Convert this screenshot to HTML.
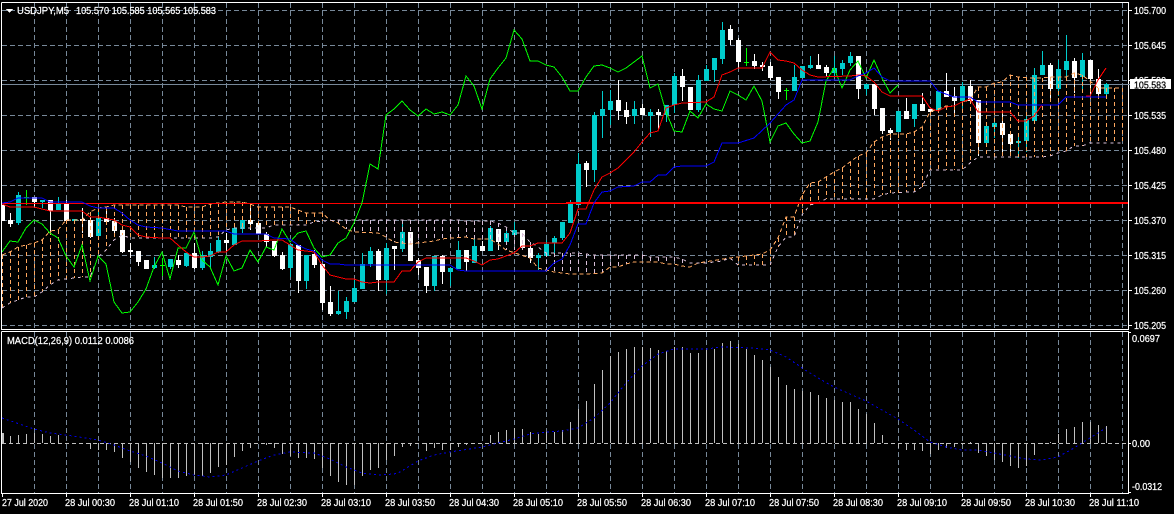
<!DOCTYPE html>
<html><head><meta charset="utf-8"><title>USDJPY,M5</title>
<style>html,body{margin:0;padding:0;background:#000;width:1174px;height:514px;overflow:hidden}svg{display:block}text{font-family:"Liberation Sans",sans-serif;font-size:10.500px;fill:#fff;stroke:#fff;stroke-width:.25px}</style>
</head><body>
<svg width="1174" height="514" viewBox="0 0 1174 514" xmlns="http://www.w3.org/2000/svg">
<rect width="1174" height="514" fill="#000"/>
<g shape-rendering="crispEdges" fill="none">
<!-- grid -->
<path stroke="#778899" stroke-dasharray="5 3" d="M2 10.5H1128M2 45.5H1128M2 80.5H1128M2 115.5H1128M2 150.5H1128M2 185.5H1128M2 220.5H1128M2 255.5H1128M2 290.5H1128M2 325.5H1128"/>
<path stroke="#778899" stroke-dasharray="5 3" d="M34.5 3V329M66.5 3V329M98.5 3V329M130.5 3V329M162.5 3V329M194.5 3V329M226.5 3V329M258.5 3V329M290.5 3V329M322.5 3V329M354.5 3V329M386.5 3V329M418.5 3V329M450.5 3V329M482.5 3V329M514.5 3V329M546.5 3V329M578.5 3V329M610.5 3V329M642.5 3V329M674.5 3V329M706.5 3V329M738.5 3V329M770.5 3V329M802.5 3V329M834.5 3V329M866.5 3V329M898.5 3V329M930.5 3V329M962.5 3V329M994.5 3V329M1026.5 3V329M1058.5 3V329M1090.5 3V329M1122.5 3V329"/>
<path stroke="#778899" stroke-dasharray="5 3" d="M34.5 332V493M66.5 332V493M98.5 332V493M130.5 332V493M162.5 332V493M194.5 332V493M226.5 332V493M258.5 332V493M290.5 332V493M322.5 332V493M354.5 332V493M386.5 332V493M418.5 332V493M450.5 332V493M482.5 332V493M514.5 332V493M546.5 332V493M578.5 332V493M610.5 332V493M642.5 332V493M674.5 332V493M706.5 332V493M738.5 332V493M770.5 332V493M802.5 332V493M834.5 332V493M866.5 332V493M898.5 332V493M930.5 332V493M962.5 332V493M994.5 332V493M1026.5 332V493M1058.5 332V493M1090.5 332V493M1122.5 332V493"/>
<path stroke="#778899" d="M2 84.5H1128"/>
<!-- white wicks -->
<path stroke="#fff" d="M10.5 213V227M34.5 197V207M50.5 200V232M66.5 200V221M82.5 208V233M90.5 217V238M106.5 207V225M114.5 218V233M122.5 227V253M130.5 243V258M138.5 251V266M146.5 260V269M178.5 255V268M194.5 243V269M226.5 233V252M250.5 208V230M258.5 222V234M266.5 232V247M274.5 241V257M282.5 252V270M298.5 245V293M314.5 250V268M322.5 264V310M330.5 286V316M378.5 249V291M394.5 246V270M410.5 232V261M418.5 258V275M426.5 267V293M442.5 255V284M466.5 250V271M482.5 241V251M498.5 229V250M522.5 230V250M530.5 243V263M586.5 161V187M618.5 80V120M626.5 102V124M642.5 104V115M658.5 109V130M682.5 69V101M690.5 87V110M730.5 25V45M738.5 38V68M754.5 54V69M762.5 62V71M770.5 62V80M778.5 77V99M818.5 54V69M826.5 65V76M858.5 56V99M874.5 84V115M882.5 108V134M890.5 128V140M906.5 98V119M922.5 93V111M930.5 109V115M946.5 73V97M954.5 87V115M970.5 80V103M978.5 100V156M1002.5 113V152M1010.5 134V153M1050.5 63V98M1074.5 58V93M1090.5 60V97M1098.5 69V96"/>
<!-- cyan wicks -->
<path stroke="#00cccc" d="M18.5 192V225M42.5 200V208M58.5 197V210M74.5 219V223M98.5 208V240M154.5 257V269M170.5 259V269M186.5 253V267M202.5 251V270M210.5 243V268M218.5 237V253M234.5 223V245M242.5 220V233M290.5 244V277M306.5 255V289M338.5 291V315M346.5 297V319M354.5 280V302M362.5 253V289M370.5 247V267M386.5 243V294M402.5 223V252M434.5 256V291M450.5 268V286M458.5 241V269M474.5 238V263M490.5 226V251M506.5 227V242M514.5 222V235M538.5 253V270M546.5 240V256M554.5 236V254M562.5 222V240M570.5 200V223M578.5 153V205M594.5 112V182M602.5 91V138M610.5 90V125M634.5 101V124M650.5 109V137M666.5 105V122M674.5 73V113M698.5 75V112M706.5 65V81M714.5 58V82M722.5 22V64M794.5 65V91M802.5 66V78M810.5 56V69M834.5 56V76M842.5 60V75M850.5 52V66M866.5 84V95M898.5 111V132M914.5 104V127M938.5 91V110M962.5 82V108M986.5 126V143M994.5 120V138M1018.5 133V158M1026.5 115V152M1034.5 68V121M1042.5 51V75M1058.5 60V96M1066.5 35V80M1082.5 53V90M1106.5 83V96"/>
<!-- green doji -->
<path stroke="#00ff00" d="M26.5 190V205M24 197.5H29M162.5 258V276M160 265.5H165M746.5 48V66M744 62.5H749M786.5 88V100M784 90.5H789"/>
<!-- white bodies -->
<path fill="#fff" d="M2 205h3v16h-3zM8 220h5v4h-5zM32 197h5v5h-5zM48 200h5v11h-5zM64 203h5v18h-5zM80 219h5v2h-5zM88 220h5v17h-5zM104 218h5v4h-5zM112 221h5v10h-5zM120 230h5v22h-5zM128 250h5v2h-5zM136 251h5v11h-5zM144 260h5v9h-5zM176 260h5v5h-5zM192 253h5v15h-5zM224 240h5v3h-5zM248 220h5v4h-5zM256 223h5v11h-5zM264 234h5v8h-5zM272 241h5v15h-5zM280 255h5v14h-5zM296 245h5v36h-5zM312 254h5v11h-5zM320 264h5v39h-5zM328 302h5v12h-5zM376 251h5v29h-5zM392 246h5v3h-5zM408 232h5v29h-5zM416 260h5v8h-5zM424 267h5v19h-5zM440 256h5v16h-5zM464 250h5v12h-5zM480 246h5v5h-5zM496 229h5v13h-5zM520 230h5v18h-5zM528 248h5v10h-5zM584 163h5v7h-5zM616 100h5v11h-5zM624 110h5v7h-5zM640 108h5v7h-5zM656 112h5v3h-5zM680 76h5v11h-5zM688 87h5v23h-5zM728 29h5v11h-5zM736 40h5v22h-5zM752 61h5v5h-5zM760 65h5v2h-5zM768 66h5v12h-5zM776 77h5v15h-5zM816 65h5v4h-5zM824 67h5v6h-5zM856 56h5v33h-5zM872 84h5v25h-5zM880 108h5v23h-5zM888 130h5v3h-5zM904 111h5v8h-5zM920 104h5v7h-5zM928 109h5v3h-5zM944 91h5v6h-5zM952 96h5v5h-5zM968 86h5v15h-5zM976 100h5v43h-5zM1000 123h5v12h-5zM1008 134h5v10h-5zM1048 65h5v24h-5zM1072 61h5v17h-5zM1088 60h5v19h-5zM1096 79h5v15h-5z"/>
<!-- cyan bodies -->
<path fill="#00cccc" d="M16 195h5v28h-5zM40 200h5v2h-5zM56 203h5v7h-5zM72 219h5v2h-5zM96 218h5v18h-5zM152 265h5v3h-5zM168 259h5v8h-5zM184 253h5v13h-5zM200 255h5v13h-5zM208 251h5v6h-5zM216 240h5v12h-5zM232 228h5v17h-5zM240 220h5v9h-5zM288 244h5v24h-5zM304 255h5v26h-5zM336 311h5v3h-5zM344 301h5v11h-5zM352 288h5v14h-5zM360 264h5v25h-5zM368 251h5v13h-5zM384 248h5v32h-5zM400 232h5v17h-5zM432 256h5v30h-5zM448 268h5v4h-5zM456 250h5v19h-5zM472 246h5v17h-5zM488 228h5v23h-5zM504 233h5v9h-5zM512 230h5v5h-5zM536 255h5v3h-5zM544 244h5v12h-5zM552 238h5v5h-5zM560 222h5v16h-5zM568 204h5v19h-5zM576 164h5v41h-5zM592 115h5v55h-5zM600 109h5v7h-5zM608 101h5v9h-5zM632 109h5v7h-5zM648 112h5v4h-5zM664 105h5v10h-5zM672 76h5v29h-5zM696 80h5v30h-5zM704 69h5v12h-5zM712 58h5v12h-5zM720 30h5v29h-5zM792 77h5v14h-5zM800 66h5v12h-5zM808 65h5v3h-5zM832 68h5v5h-5zM840 63h5v6h-5zM848 56h5v7h-5zM864 84h5v5h-5zM896 111h5v21h-5zM912 104h5v15h-5zM936 91h5v19h-5zM960 86h5v15h-5zM984 126h5v17h-5zM992 123h5v4h-5zM1016 141h5v2h-5zM1024 119h5v22h-5zM1032 75h5v46h-5zM1040 65h5v10h-5zM1056 69h5v20h-5zM1064 61h5v9h-5zM1080 60h5v17h-5zM1104 84h5v10h-5z"/>
<!-- cloud verticals -->
<path stroke="#ffa860" stroke-dasharray="4 3" d="M2.5 255V308M10.5 252V303M18.5 247V300M26.5 245V297M34.5 243V297M42.5 240V292M50.5 231V285M58.5 230V280M66.5 220V279M74.5 220V278M82.5 220V277M90.5 212V277M98.5 208V257M106.5 207V250M114.5 205V240M122.5 205V235M130.5 205V238M138.5 205V238M146.5 205V238M154.5 205V238M162.5 205V238M170.5 205V238M178.5 205V238M186.5 207V238M194.5 207V238M202.5 207V238M210.5 204V238M218.5 203V237M226.5 202V230M234.5 202V228M242.5 202V228M250.5 204V228M258.5 207V228M266.5 207V228M274.5 207V225M282.5 207V225M290.5 207V225M298.5 210V225M306.5 213V225M314.5 213V222M322.5 213V221M738.5 257V265M746.5 256V265M754.5 255V265M762.5 254V265M770.5 250V265M778.5 238V247M786.5 217V237M794.5 217V237M802.5 195V215M810.5 183V205M818.5 182V203M826.5 177V199M834.5 172V199M842.5 168V199M850.5 162V199M858.5 156V199M866.5 153V199M874.5 142V199M882.5 137V195M890.5 134V193M898.5 134V193M906.5 134V192M914.5 132V192M922.5 127V187M930.5 112V170M938.5 109V170M946.5 106V170M954.5 106V170M962.5 102V170M970.5 100V163M978.5 87V157M986.5 87V157M994.5 83V157M1002.5 82V157M1010.5 75V157M1018.5 77V157M1026.5 77V157M1034.5 78V157M1042.5 78V157M1050.5 77V156M1058.5 77V153M1066.5 77V151M1074.5 73V146M1082.5 75V146M1090.5 81V143M1098.5 88V143M1106.5 88V143M1114.5 88V143M1122.5 88V143"/>
<path stroke="#d8bfd8" stroke-dasharray="4 3" d="M338.5 220V223M346.5 220V229M354.5 220V232M362.5 220V233M370.5 220V233M378.5 220V233M386.5 220V237M394.5 220V242M402.5 220V244M410.5 220V244M418.5 220V243M426.5 220V241M434.5 220V241M442.5 220V239M450.5 220V238M458.5 220V238M466.5 221V237M474.5 221V239M482.5 221V239M490.5 221V239M498.5 223V244M506.5 227V250M514.5 233V250M522.5 233V250M530.5 242V258M546.5 253V270M554.5 253V272M562.5 253V273M570.5 253V274M578.5 253V274M586.5 254V274M594.5 255V274M602.5 255V273M610.5 255V267M618.5 255V267M626.5 255V264M634.5 255V262M642.5 255V262M650.5 257V262M658.5 257V262M666.5 257V264M674.5 257V264M682.5 259V266"/>
<!-- span A -->
<polyline stroke="#ffa860" stroke-dasharray="4 3" points="2,255 10,252 18,247 26,245 34,243 42,240 50,231 58,230 66,220 74,220 82,220 90,212 98,208 106,207 114,205 178,205 186,207 202,207 210,204 218,203 226,202 242,202 250,204 258,207 290,207 298,210 306,213 322,213 330,220 338,223 346,229 354,232 378,233 386,237 394,242 410,244 418,243 434,241 442,239 450,238 466,237 474,239 490,239 498,244 506,250 530,258 538,268 546,270 554,272 562,273 570,274 586,274 602,273 610,267 618,267 626,264 634,262 658,262 666,264 674,264 682,266 690,267 698,263 730,258 738,257 746,256 754,255 762,254 770,250 778,238 786,217 794,217 802,195 810,183 818,182 826,177 834,172 842,168 850,162 858,156 866,153 874,142 882,137 890,134 906,134 914,132 922,127 930,112 938,109 946,106 954,106 962,102 970,100 978,87 986,87 994,83 1002,82 1010,75 1018,77 1034,78 1042,78 1050,77 1066,77 1074,73 1082,75 1090,81 1098,88 1122,88"/>
<!-- span B -->
<polyline stroke="#d8bfd8" stroke-dasharray="3 4" points="2,308 10,303 18,300 26,297 34,297 42,292 50,285 58,280 66,279 74,278 82,277 90,277 98,257 106,250 114,240 122,235 130,238 202,238 210,238 218,237 226,230 234,228 266,228 274,225 298,225 306,225 314,222 322,221 338,220 458,220 466,221 490,221 498,223 506,227 514,233 522,233 530,242 538,247 546,253 578,253 586,254 594,255 642,255 650,257 674,257 682,259 690,263 706,263 722,261 730,258 738,265 770,265 778,247 786,237 794,237 802,215 810,205 818,203 826,199 874,199 882,195 890,193 906,192 914,192 922,187 930,170 962,170 970,163 978,157 1042,157 1050,156 1058,153 1066,151 1074,146 1082,146 1090,143 1122,143"/>
<!-- horizontal level -->
<path stroke="#ff0000" d="M2 203.5H566"/>
<path fill="#ff0000" d="M566 202h562v2H566z"/>
<!-- chikou -->
<polyline stroke="#00ff00" points="2,252 10,241 18,242 26,228 34,220 42,224 50,233 58,238 66,256 74,267 82,245 90,281 98,256 106,264 114,302 122,313 130,312 138,302 146,289 154,267 162,252 170,279 178,248 186,248 194,232 202,260 210,267 218,285 226,256 234,271 242,268 250,250 258,262 266,247 274,250 282,229 290,242 298,233 306,231 314,248 322,257 330,255 338,243 346,238 354,223 362,203 370,164 378,169 386,115 394,109 402,101 410,110 418,116 426,109 434,114 442,112 450,115 458,105 466,76 474,86 482,109 490,79 498,68 506,58 514,30 522,39 530,61 538,61 546,65 554,67 562,77 570,91 578,91 586,77 594,66 602,65 610,68 618,72 626,68 634,62 642,56 650,88 658,84 666,112 674,131 682,132 690,111 698,118 706,104 714,109 722,111 730,91 738,95 746,100 754,86 762,101 770,142 778,126 786,123 794,134 802,143 810,141 818,122 826,81 834,68 842,88 850,70 858,61 866,78 874,60 882,78 890,93 898,85"/>
<!-- tenkan -->
<polyline stroke="#ff0000" points="2,204 10,207 34,207 42,209 50,211 82,211 90,217 98,217 114,220 122,225 130,227 138,235 146,237 162,238 170,238 178,245 186,252 194,257 202,257 210,256 218,252 226,252 234,245 242,241 258,241 274,240 282,240 290,245 298,250 314,252 322,265 330,275 338,277 346,279 354,279 362,282 370,283 378,282 394,282 402,271 410,271 418,262 426,258 466,258 474,261 482,265 490,260 498,259 506,256 514,253 522,246 530,246 538,243 562,243 570,233 578,209 586,209 594,190 602,177 610,173 618,168 626,160 634,152 642,142 650,133 658,131 666,108 674,105 682,103 706,102 714,97 722,75 730,72 738,68 762,68 770,52 778,60 786,61 794,63 802,70 810,75 818,77 850,76 858,75 866,76 874,82 882,92 890,96 922,96 930,108 938,111 946,107 954,106 962,102 970,99 978,112 1010,112 1018,121 1026,121 1034,116 1042,105"/>
<polyline stroke="#ff0000" points="1086,96 1090,96 1098,80 1106,68"/>
<!-- kijun -->
<polyline stroke="#0000ff" points="2,203 10,202 18,198 42,198 50,202 82,202 90,206 98,208 114,208 122,213 130,220 138,225 146,227 162,228 178,231 226,231 234,234 266,234 274,238 290,239 298,245 306,249 314,251 322,260 330,264 338,264 346,265 450,265 458,270 466,271 506,271 546,271 554,263 562,259 570,245 578,224 586,224 594,203 602,192 610,191 618,187 634,186 642,182 650,182 658,175 666,175 674,167 682,166 706,166 714,162 722,143 738,143 754,138 770,123 786,105 794,100 802,80 850,80 858,76 866,73 874,68 882,77 890,81 930,81 938,91 954,97 970,97 978,102 1010,102 1018,105 1058,105 1066,97 1106,97"/>
<!-- MACD -->
<path stroke="#c0c0c0" d="M2.5 433V443M3.5 433V443M10.5 436V443M18.5 435V443M26.5 434V443M34.5 433V443M42.5 434V443M50.5 436V443M58.5 435V443M90.5 443V449M98.5 443V450M106.5 443V450M114.5 443V452M122.5 443V458M130.5 443V462M138.5 443V468M146.5 443V472M154.5 443V475M162.5 443V478M170.5 443V478M178.5 443V478M186.5 443V476M194.5 443V475M202.5 443V476M210.5 443V473M218.5 443V467M226.5 443V465M234.5 443V457M242.5 443V451M250.5 443V448M266.5 443V445M274.5 443V448M282.5 443V454M290.5 443V456M298.5 443V458M306.5 443V458M314.5 443V459M322.5 443V468M330.5 443V476M338.5 443V482M346.5 443V485M354.5 443V485M362.5 443V476M370.5 443V470M378.5 443V468M386.5 443V460M394.5 443V456M402.5 443V447M410.5 443V446M426.5 443V451M434.5 443V448M442.5 443V450M450.5 443V450M458.5 443V447M466.5 443V445M490.5 435V443M498.5 432V443M506.5 430V443M514.5 428V443M522.5 429V443M530.5 432V443M538.5 434V443M546.5 432V443M554.5 432V443M562.5 430V443M570.5 422V443M578.5 409V443M586.5 401V443M594.5 384V443M602.5 370V443M610.5 356V443M618.5 352V443M626.5 349V443M634.5 347V443M642.5 347V443M650.5 348V443M658.5 350V443M666.5 351V443M674.5 347V443M682.5 347V443M690.5 353V443M698.5 353V443M706.5 350V443M714.5 349V443M722.5 343V443M730.5 341V443M738.5 344V443M746.5 349V443M754.5 355V443M762.5 360V443M770.5 367V443M778.5 377V443M786.5 385V443M794.5 389V443M802.5 391V443M810.5 392V443M818.5 395V443M826.5 398V443M834.5 400V443M842.5 402V443M850.5 402V443M858.5 409V443M866.5 414V443M874.5 423V443M882.5 435V443M898.5 443V448M906.5 443V450M914.5 443V450M922.5 443V451M930.5 443V454M938.5 443V450M946.5 443V448M954.5 443V447M962.5 443V445M970.5 442V443M978.5 443V453M986.5 443V456M994.5 443V460M1002.5 443V462M1010.5 443V466M1018.5 443V468M1026.5 443V466M1034.5 443V455M1042.5 443V444M1050.5 442V443M1058.5 434V443M1066.5 429V443M1074.5 427V443M1082.5 422V443M1090.5 422V443M1098.5 425V443M1106.5 426V443"/>
<path stroke="#c0c0c0" stroke-dasharray="4 3" d="M2 443.5H1128"/>
<polyline stroke="#0000e6" stroke-dasharray="2 3" points="2,418 34,429 50,433 66,435 98,440 114,445 130,451 146,456 162,463 178,471 194,475 210,477 226,475 242,468 258,461 274,455 290,452 314,453 330,459 346,467 362,473 378,475 394,474 400,472 418,461 434,455 450,452 482,447 498,443 514,439 530,434 546,432 562,431 578,428 594,418 610,403 626,383 642,366 658,354 674,349 706,349 722,347 754,348 770,350 786,357 798,365 802,368 818,378 834,387 850,394 866,401 882,410 898,419 914,430 930,442 946,447 962,450 978,450 994,453 1010,456 1026,459 1042,460 1058,457 1074,448 1090,438 1106,428"/>
<!-- frames -->
<path stroke="#fff" d="M1.5 2.5H1128.5V329.5H1.5V2.5M1.5 331.5H1128.5V493.5H1.5V331.5"/>
<path stroke="#fff" d="M1128 10.5H1132M1128 45.5H1132M1128 80.5H1132M1128 115.5H1132M1128 150.5H1132M1128 185.5H1132M1128 220.5H1132M1128 255.5H1132M1128 290.5H1132M1128 325.5H1132M1128 332.5H1131M1128 443.5H1131M1128 492.5H1131"/>
<path stroke="#fff" d="M2.5 493V497M66.5 493V497M130.5 493V497M194.5 493V497M258.5 493V497M322.5 493V497M386.5 493V497M450.5 493V497M514.5 493V497M578.5 493V497M642.5 493V497M706.5 493V497M770.5 493V497M834.5 493V497M898.5 493V497M962.5 493V497M1026.5 493V497M1090.5 493V497"/>
<path fill="#fff" d="M6 9h7l-3.500 4z"/>
</g>
<!-- header -->
<text x="17" y="14" textLength="52" lengthAdjust="spacingAndGlyphs">USDJPY,M5</text>
<text x="76" y="14" textLength="140" lengthAdjust="spacingAndGlyphs">105.570 105.585 105.565 105.583</text>
<text x="7" y="344" textLength="127" lengthAdjust="spacingAndGlyphs">MACD(12,26,9) 0.0112 0.0086</text>
<!-- price axis -->
<text x="1134" y="14" textLength="32" lengthAdjust="spacingAndGlyphs">105.700</text>
<text x="1134" y="49" textLength="32" lengthAdjust="spacingAndGlyphs">105.645</text>
<text x="1134" y="84" textLength="32" lengthAdjust="spacingAndGlyphs">105.590</text>
<text x="1134" y="119" textLength="32" lengthAdjust="spacingAndGlyphs">105.535</text>
<text x="1134" y="154" textLength="32" lengthAdjust="spacingAndGlyphs">105.480</text>
<text x="1134" y="189" textLength="32" lengthAdjust="spacingAndGlyphs">105.425</text>
<text x="1134" y="224" textLength="32" lengthAdjust="spacingAndGlyphs">105.370</text>
<text x="1134" y="259" textLength="32" lengthAdjust="spacingAndGlyphs">105.315</text>
<text x="1134" y="294" textLength="32" lengthAdjust="spacingAndGlyphs">105.260</text>
<text x="1134" y="329" textLength="32" lengthAdjust="spacingAndGlyphs">105.205</text>
<rect x="1130" y="79" width="41" height="10" fill="#fff"/>
<rect x="1128" y="84" width="2" height="1" fill="#778899"/>
<text x="1134" y="88.500" textLength="32" lengthAdjust="spacingAndGlyphs" style="fill:#000;stroke:#000">105.583</text>
<!-- MACD axis -->
<text x="1132" y="342" textLength="28" lengthAdjust="spacingAndGlyphs">0.0697</text>
<text x="1132" y="447" textLength="18" lengthAdjust="spacingAndGlyphs">0.00</text>
<text x="1132" y="490" textLength="30" lengthAdjust="spacingAndGlyphs">-0.0312</text>
<!-- time axis -->
<text x="2" y="506" textLength="46" lengthAdjust="spacingAndGlyphs">27 Jul 2020</text>
<text x="65" y="506" textLength="50" lengthAdjust="spacingAndGlyphs">28 Jul 00:30</text>
<text x="129" y="506" textLength="50" lengthAdjust="spacingAndGlyphs">28 Jul 01:10</text>
<text x="193" y="506" textLength="50" lengthAdjust="spacingAndGlyphs">28 Jul 01:50</text>
<text x="257" y="506" textLength="50" lengthAdjust="spacingAndGlyphs">28 Jul 02:30</text>
<text x="321" y="506" textLength="50" lengthAdjust="spacingAndGlyphs">28 Jul 03:10</text>
<text x="385" y="506" textLength="50" lengthAdjust="spacingAndGlyphs">28 Jul 03:50</text>
<text x="449" y="506" textLength="50" lengthAdjust="spacingAndGlyphs">28 Jul 04:30</text>
<text x="513" y="506" textLength="50" lengthAdjust="spacingAndGlyphs">28 Jul 05:10</text>
<text x="577" y="506" textLength="50" lengthAdjust="spacingAndGlyphs">28 Jul 05:50</text>
<text x="641" y="506" textLength="50" lengthAdjust="spacingAndGlyphs">28 Jul 06:30</text>
<text x="705" y="506" textLength="50" lengthAdjust="spacingAndGlyphs">28 Jul 07:10</text>
<text x="769" y="506" textLength="50" lengthAdjust="spacingAndGlyphs">28 Jul 07:50</text>
<text x="833" y="506" textLength="50" lengthAdjust="spacingAndGlyphs">28 Jul 08:30</text>
<text x="897" y="506" textLength="50" lengthAdjust="spacingAndGlyphs">28 Jul 09:10</text>
<text x="961" y="506" textLength="50" lengthAdjust="spacingAndGlyphs">28 Jul 09:50</text>
<text x="1025" y="506" textLength="50" lengthAdjust="spacingAndGlyphs">28 Jul 10:30</text>
<text x="1089" y="506" textLength="50" lengthAdjust="spacingAndGlyphs">28 Jul 11:10</text>
</svg>
</body></html>
